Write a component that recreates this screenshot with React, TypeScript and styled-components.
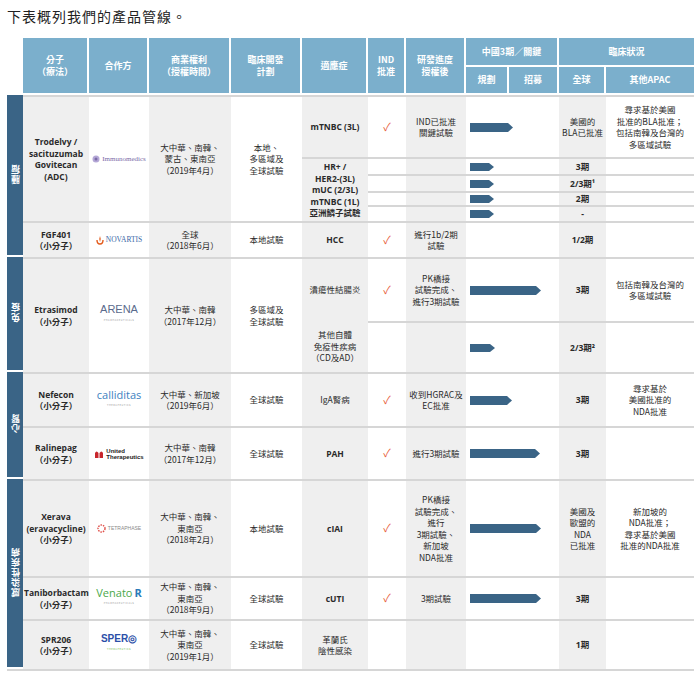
import React from "react";
import styled, { createGlobalStyle } from "styled-components";

const Global = createGlobalStyle`
  body { margin: 0; background: #fff; font-family: "Noto Sans CJK TC", "Liberation Sans", sans-serif; }
`;
const Page = styled.div`padding: 6px 6px 0 7px;`;
const Title = styled.div`
  font-size: 14px; color: #222; height: 32px; line-height: 20px;
  font-family: "Noto Sans CJK TC", sans-serif; letter-spacing: 1px;
`;
const Table = styled.table`
  border-collapse: separate; border-spacing: 0; table-layout: fixed; width: 687px;
  border-bottom: 2px solid #d6d6d6;
`;
const Th = styled.th`
  background: #7bafcc; color: #fff; font-size: 9px; font-weight: 700; line-height: 12px;
  border-right: 2px solid #fff; border-bottom: 2px solid #fff; padding: 0; text-align: center;
  white-space: pre-line; font-family: "Noto Sans CJK TC", sans-serif;
  &:last-child { border-right: 0; }
`;
const Blank = styled.th`background: #fff;`;
const Td = styled.td<{ $grey?: boolean; $bold?: boolean; $noTop?: boolean }>`
  background: ${(p) => (p.$grey ? "#efefef" : "#fff")};
  border-top: ${(p) => (p.$noTop ? "0" : "2px solid #d6d6d6")};
  font-size: 8.5px; line-height: 11.5px; color: #2a2a2a; text-align: center; vertical-align: middle;
  padding: 0 1px; white-space: pre-line;
  font-weight: ${(p) => (p.$bold ? 700 : 400)};
  font-family: ${(p) => (p.$bold ? '"Open Sans", "Noto Sans CJK TC", sans-serif' : '"Noto Sans CJK TC", sans-serif')};
`;
const Side = styled.td`
  background: #3a6486; color: #fff; font-weight: 700; font-size: 9px;
  border-bottom: 2px solid #fff; padding: 0; text-align: center; vertical-align: middle;
`;
const Vert = styled.span`writing-mode: vertical-rl; transform: rotate(180deg); display: inline-block; letter-spacing: 1px;`;
const Check = styled.span`color: #e8603c; font-size: 11px;`;
const ArrowWrap = styled.div`display: flex; padding-left: 3px;`;
const LogoBox = styled.div<{ $c: string; $f?: string; $s?: number; $w?: number }>`
  display: flex; align-items: center; justify-content: center; gap: 2px;
  color: ${(p) => p.$c}; font-family: ${(p) => p.$f || '"Liberation Sans", sans-serif'};
  font-size: ${(p) => p.$s || 8}px; font-weight: ${(p) => p.$w || 400}; line-height: 1;
`;

const Arrow = ({ w, h = 9 }: { w: number; h?: number }) => (
  <ArrowWrap>
    <svg width={w} height={h} viewBox={`0 0 ${w} ${h}`}>
      <polygon points={`0,0 ${w - 5},0 ${w},${h / 2} ${w - 5},${h} 0,${h}`} fill="#3a6486" />
    </svg>
  </ArrowWrap>
);

const Immuno = () => (
  <LogoBox $c="#7a6aa8" $f='"Liberation Serif", serif' $s={7}>
    <svg width="8" height="8" viewBox="0 0 8 8"><circle cx="4" cy="4" r="3.5" fill="#b4a7d6" /><circle cx="4" cy="4" r="1.5" fill="#7a6aa8" /></svg>
    Immunomedics
  </LogoBox>
);
const Novartis = () => (
  <LogoBox $c="#3b68a8" $f='"Liberation Serif", serif' $s={7.5}>
    <svg width="8" height="9" viewBox="0 0 8 9"><path d="M1 4 Q1 8 4 8 Q7 8 7 4" stroke="#e35a1a" strokeWidth="1.4" fill="none" /><path d="M4 0 Q5.5 3 4 6 Q2.5 3 4 0" fill="#e35a1a" /></svg>
    NOVARTIS
  </LogoBox>
);
const Sub = styled.div`font-size: 2.5px; letter-spacing: 0.5px; color: #999; text-align: center;`;
const Arena = () => (
  <div>
    <LogoBox $c="#5a6a8c" $s={11} $f='"Liberation Sans", sans-serif'>ARENA</LogoBox>
    <Sub>PHARMACEUTICALS</Sub>
  </div>
);
const Calli = () => (
  <div>
    <LogoBox $c="#3c7fc0" $s={11} $f='"Open Sans", sans-serif'>calliditas</LogoBox>
    <Sub>THERAPEUTICS</Sub>
  </div>
);
const United = () => (
  <LogoBox $c="#222" $s={6} $w={700}>
    <svg width="10" height="9" viewBox="0 0 10 9"><path d="M1 9 L1 4 Q2.5 1 4.5 4 L4.5 9 Z M5.5 9 L5.5 4 Q7.5 1 9 4 L9 9 Z" fill="#c8262c" /></svg>
    <span style={{ lineHeight: "6px", textAlign: "left" }}>United<br />Therapeutics</span>
  </LogoBox>
);
const Tetra = () => (
  <LogoBox $c="#8a8a8a" $s={5} >
    <svg width="9" height="9" viewBox="0 0 9 9"><circle cx="4.5" cy="4.5" r="3.5" fill="none" stroke="#e0504a" strokeWidth="1.4" strokeDasharray="1.5 1" /></svg>
    TETRAPHASE
  </LogoBox>
);
const Venato = () => (
  <div>
    <LogoBox $c="#4aa84a" $s={11} $f='"Open Sans", sans-serif'>Venato<span style={{ color: "#2a7ab8", fontWeight: 700 }}>R</span></LogoBox>
    <Sub>PHARMACEUTICALS</Sub>
  </div>
);
const Spero = () => (
  <div>
    <LogoBox $c="#2b4fa8" $s={10} $w={700}>SPER◎</LogoBox>
    <Sub style={{ color: "#6bb84a" }}>THERAPEUTICS</Sub>
  </div>
);

const widths = [16, 66, 60, 82, 71, 66, 38, 60, 43, 50, 47, 88];
const ck = <Check>✓</Check>;

export default function App() {
  return (
    <Page>
      <Global />
      <Title>下表概列我們的產品管線。</Title>
      <Table>
        <colgroup>{widths.map((w, i) => <col key={i} style={{ width: w }} />)}</colgroup>
        <thead>
          <tr style={{ height: 29 }}>
            <Blank rowSpan={2} />
            <Th rowSpan={2}>{"分子\n（療法）"}</Th>
            <Th rowSpan={2}>合作方</Th>
            <Th rowSpan={2}>{"商業權利\n（授權時間）"}</Th>
            <Th rowSpan={2}>{"臨床開發\n計劃"}</Th>
            <Th rowSpan={2}>適應症</Th>
            <Th rowSpan={2}>{"IND\n批准"}</Th>
            <Th rowSpan={2}>{"研發進度\n授權後"}</Th>
            <Th colSpan={2}>中國3期／關鍵</Th>
            <Th colSpan={2}>臨床狀況</Th>
          </tr>
          <tr style={{ height: 28 }}>
            <Th>規劃</Th><Th>招募</Th><Th>全球</Th><Th>其他APAC</Th>
          </tr>
        </thead>
        <tbody>
          <tr style={{ height: 62 }}>
            <Side rowSpan={6}><Vert>腫瘤</Vert></Side>
            <Td $grey $bold rowSpan={5}>{"Trodelvy /\nsacituzumab\nGovitecan\n(ADC)"}</Td>
            <Td rowSpan={5}><Immuno /></Td>
            <Td $grey rowSpan={5}>{"大中華、南韓、\n蒙古、東南亞\n（2019年4月）"}</Td>
            <Td rowSpan={5}>{"本地、\n多區域及\n全球試驗"}</Td>
            <Td $grey $bold>mTNBC (3L)</Td>
            <Td>{ck}</Td>
            <Td $grey>{"IND已批准\n關鍵試驗"}</Td>
            <Td colSpan={2}><Arrow w={43} /></Td>
            <Td $grey>{"美國的\nBLA已批准"}</Td>
            <Td>{"尋求基於美國\n批准的BLA批准；\n包括南韓及台灣的\n多區域試驗"}</Td>
          </tr>
          <tr style={{ height: 17 }}>
            <Td $grey $bold rowSpan={4}>{"HR+ /\nHER2-(3L)\nmUC (2/3L)\nmTNBC (1L)\n亞洲鱗子試驗"}</Td>
            <Td /><Td $grey /><Td colSpan={2}><Arrow w={24} h={8} /></Td><Td $grey $bold>3期</Td><Td />
          </tr>
          <tr style={{ height: 17 }}>
            <Td /><Td $grey /><Td colSpan={2}><Arrow w={24} h={8} /></Td><Td $grey $bold>2/3期¹</Td><Td />
          </tr>
          <tr style={{ height: 14 }}>
            <Td /><Td $grey /><Td colSpan={2}><Arrow w={24} h={8} /></Td><Td $grey $bold>2期</Td><Td />
          </tr>
          <tr style={{ height: 16 }}>
            <Td /><Td $grey /><Td colSpan={2}><Arrow w={24} h={8} /></Td><Td $grey $bold>-</Td><Td />
          </tr>
          <tr style={{ height: 36 }}>
            <Td $grey $bold>{"FGF401\n（小分子）"}</Td>
            <Td><Novartis /></Td>
            <Td $grey>{"全球\n（2018年6月）"}</Td>
            <Td>本地試驗</Td>
            <Td $grey $bold>HCC</Td>
            <Td>{ck}</Td>
            <Td $grey>{"進行1b/2期\n試驗"}</Td>
            <Td colSpan={2} />
            <Td $grey $bold>1/2期</Td>
            <Td />
          </tr>
          <tr style={{ height: 64 }}>
            <Side rowSpan={2}><Vert>免疫</Vert></Side>
            <Td $grey $bold rowSpan={2}>{"Etrasimod\n（小分子）"}</Td>
            <Td rowSpan={2}><Arena /></Td>
            <Td $grey rowSpan={2}>{"大中華、南韓\n（2017年12月）"}</Td>
            <Td rowSpan={2}>{"多區域及\n全球試驗"}</Td>
            <Td $grey>潰瘍性結腸炎</Td>
            <Td>{ck}</Td>
            <Td $grey>{"PK橋接\n試驗完成、\n進行3期試驗"}</Td>
            <Td colSpan={2}><Arrow w={71} /></Td>
            <Td $grey $bold>3期</Td>
            <Td>{"包括南韓及台灣的\n多區域試驗"}</Td>
          </tr>
          <tr style={{ height: 51 }}>
            <Td $grey $noTop>{"其他自體\n免疫性疾病\n（CD及AD）"}</Td>
            <Td /><Td $grey />
            <Td colSpan={2}><Arrow w={25} h={8} /></Td>
            <Td $grey $bold>2/3期²</Td>
            <Td />
          </tr>
          <tr style={{ height: 54 }}>
            <Side rowSpan={2}><Vert>心腎</Vert></Side>
            <Td $grey $bold>{"Nefecon\n（小分子）"}</Td>
            <Td><Calli /></Td>
            <Td $grey>{"大中華、新加坡\n（2019年6月）"}</Td>
            <Td>全球試驗</Td>
            <Td $grey>IgA腎病</Td>
            <Td>{ck}</Td>
            <Td $grey>{"收到HGRAC及\nEC批准"}</Td>
            <Td colSpan={2}><Arrow w={42} /></Td>
            <Td $grey $bold>3期</Td>
            <Td>{"尋求基於\n美國批准的\nNDA批准"}</Td>
          </tr>
          <tr style={{ height: 53 }}>
            <Td $grey $bold>{"Ralinepag\n（小分子）"}</Td>
            <Td><United /></Td>
            <Td $grey>{"大中華、南韓\n（2017年12月）"}</Td>
            <Td>全球試驗</Td>
            <Td $grey $bold>PAH</Td>
            <Td>{ck}</Td>
            <Td $grey>進行3期試驗</Td>
            <Td colSpan={2}><Arrow w={70} /></Td>
            <Td $grey $bold>3期</Td>
            <Td />
          </tr>
          <tr style={{ height: 97 }}>
            <Side rowSpan={3}><Vert>感染性疾病</Vert></Side>
            <Td $grey $bold>{"Xerava\n(eravacycline)\n（小分子）"}</Td>
            <Td><Tetra /></Td>
            <Td $grey>{"大中華、南韓、\n東南亞\n（2018年2月）"}</Td>
            <Td>本地試驗</Td>
            <Td $grey $bold>cIAI</Td>
            <Td>{ck}</Td>
            <Td $grey>{"PK橋接\n試驗完成、\n進行\n3期試驗、\n新加坡\nNDA批准"}</Td>
            <Td colSpan={2}><Arrow w={71} /></Td>
            <Td $grey>{"美國及\n歐盟的\nNDA\n已批准"}</Td>
            <Td>{"新加坡的\nNDA批准；\n尋求基於美國\n批准的NDA批准"}</Td>
          </tr>
          <tr style={{ height: 43 }}>
            <Td $grey $bold>{"Taniborbactam\n（小分子）"}</Td>
            <Td><Venato /></Td>
            <Td $grey>{"大中華、南韓、\n東南亞\n（2018年9月）"}</Td>
            <Td>全球試驗</Td>
            <Td $grey $bold>cUTI</Td>
            <Td>{ck}</Td>
            <Td $grey>3期試驗</Td>
            <Td colSpan={2}><Arrow w={71} /></Td>
            <Td $grey $bold>3期</Td>
            <Td />
          </tr>
          <tr style={{ height: 50 }}>
            <Td $grey $bold>{"SPR206\n（小分子）"}</Td>
            <Td><Spero /></Td>
            <Td $grey>{"大中華、南韓、\n東南亞\n（2019年1月）"}</Td>
            <Td>全球試驗</Td>
            <Td $grey>{"革蘭氏\n陰性感染"}</Td>
            <Td /><Td $grey /><Td colSpan={2} />
            <Td $grey $bold>1期</Td>
            <Td />
          </tr>
        </tbody>
      </Table>
    </Page>
  );
}
